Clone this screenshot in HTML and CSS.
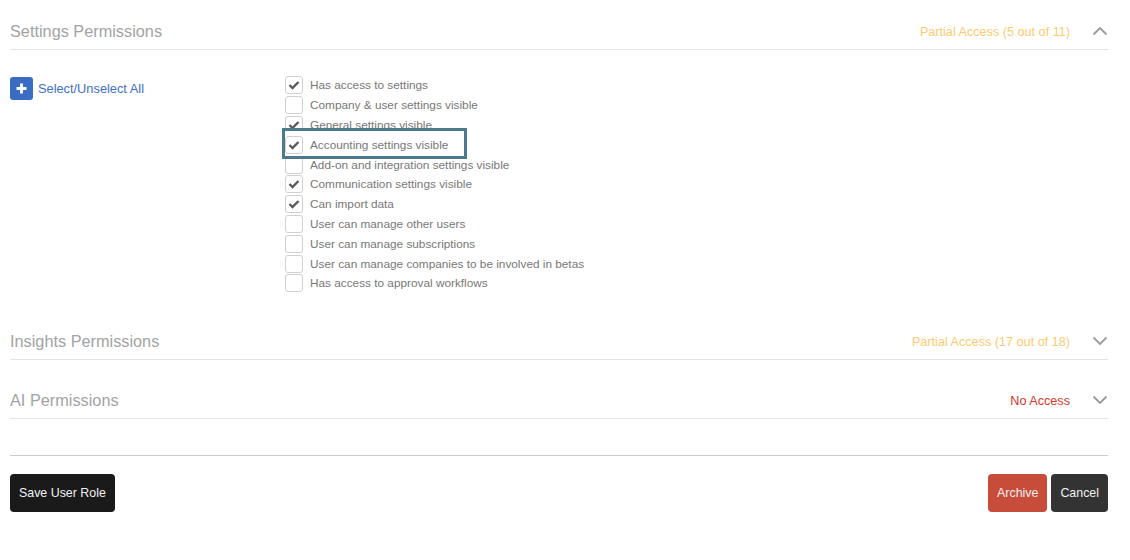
FILE: index.html
```html
<!DOCTYPE html>
<html lang="en">
  <head>
    <meta charset="UTF-8" />
    <title>User Role Permissions</title>
    <link rel="stylesheet" href="styles.css">
  </head>
  <body>
    <section class="section section-open">
      <header class="section-header">
        <h2>Settings Permissions</h2>
        <span class="access access-partial">Partial Access (5 out of 11)</span>
        <svg class="chevron" viewBox="0 0 16 10"><path d="M1.500 8.500 8 2l6.500 6.500"/></svg>
      </header>
      <div class="section-body">
        <a class="select-all">
          <span class="plus-box"><svg viewBox="0 0 10 10"><path d="M5 0.500v9M0.500 5h9"/></svg></span>
          Select/Unselect All
        </a>
        <ul class="options">
          <li class="option"><span class="box checked"><svg viewBox="0 0 12 10"><path d="M1.500 5 4.500 8 10.500 2"/></svg></span>Has access to settings</li>
          <li class="option"><span class="box"></span>Company &amp; user settings visible</li>
          <li class="option"><span class="box checked"><svg viewBox="0 0 12 10"><path d="M1.500 5 4.500 8 10.500 2"/></svg></span>General settings visible</li>
          <li class="option option-highlight"><span class="box checked"><svg viewBox="0 0 12 10"><path d="M1.500 5 4.500 8 10.500 2"/></svg></span>Accounting settings visible</li>
          <li class="option"><span class="box"></span>Add-on and integration settings visible</li>
          <li class="option"><span class="box checked"><svg viewBox="0 0 12 10"><path d="M1.500 5 4.500 8 10.500 2"/></svg></span>Communication settings visible</li>
          <li class="option"><span class="box checked"><svg viewBox="0 0 12 10"><path d="M1.500 5 4.500 8 10.500 2"/></svg></span>Can import data</li>
          <li class="option"><span class="box"></span>User can manage other users</li>
          <li class="option"><span class="box"></span>User can manage subscriptions</li>
          <li class="option"><span class="box"></span>User can manage companies to be involved in betas</li>
          <li class="option"><span class="box"></span>Has access to approval workflows</li>
        </ul>
      </div>
    </section>

    <section class="section">
      <header class="section-header">
        <h2>Insights Permissions</h2>
        <span class="access access-partial">Partial Access (17 out of 18)</span>
        <svg class="chevron" viewBox="0 0 16 10"><path d="M1.500 1.500 8 8l6.500-6.500"/></svg>
      </header>
    </section>

    <section class="section">
      <header class="section-header">
        <h2>AI Permissions</h2>
        <span class="access access-none">No Access</span>
        <svg class="chevron" viewBox="0 0 16 10"><path d="M1.500 1.500 8 8l6.500-6.500"/></svg>
      </header>
    </section>

    <footer class="actions">
      <button class="btn btn-save">Save User Role</button>
      <div class="actions-right">
        <button class="btn btn-archive">Archive</button>
        <button class="btn btn-cancel">Cancel</button>
      </div>
    </footer>
  </body>
</html>
```

FILE: styles.css
```css
html,
body {
  padding: 0;
  margin: 0;
}

body {
  width: 1098px;
  padding-left: 10px;
  font-family: "Liberation Sans", Arial, sans-serif;
  background-color: #fff;
}

.section-header {
  display: flex;
  align-items: center;
  height: 36px;
  padding-top: 13px;
  border-bottom: 1px solid #e4e4e4;
}

.section + .section .section-header {
  padding-top: 22px;
}

.section-header h2 {
  margin: 0;
  margin-right: auto;
  font-size: 16.3px;
  font-weight: 400;
  color: #a3a3a3;
}

.access {
  margin-top: 2px;
  font-size: 12.65px;
}

.access-partial {
  color: #fdcb70;
}

.access-none {
  color: #d0392b;
}

.chevron {
  width: 16px;
  height: 10px;
  margin-left: 22px;
  fill: none;
  stroke: #9a9a9a;
  stroke-width: 1.8;
}

.section-body {
  display: flex;
  height: 225.6px;
  padding-top: 25.5px;
}

.select-all {
  display: flex;
  align-items: center;
  gap: 5px;
  width: 275px;
  height: 23px;
  margin-top: 1.5px;
  font-size: 12.8px;
  color: #3f6fc4;
}

.plus-box {
  display: flex;
  align-items: center;
  justify-content: center;
  width: 23px;
  height: 23px;
  border-radius: 3px;
  background-color: #3b6cc4;
}

.plus-box svg {
  width: 11px;
  height: 11px;
  fill: none;
  stroke: #fff;
  stroke-width: 2.6;
}

.options {
  list-style: none;
  margin: 0;
  padding: 0;
}

.option {
  display: flex;
  align-items: center;
  gap: 7px;
  height: 19.8px;
  font-size: 11.8px;
  color: #777;
}

.box {
  display: flex;
  align-items: center;
  justify-content: center;
  flex: none;
  box-sizing: border-box;
  width: 18px;
  height: 18px;
  border: 1px solid #cfcfcf;
  border-radius: 3px;
  background-color: #fff;
}

.box svg {
  width: 12px;
  height: 10px;
  fill: none;
  stroke: #5a5a5a;
  stroke-width: 2.4;
}

.option-highlight {
  position: relative;
  z-index: 1;
}

.option-highlight::before {
  content: "";
  position: absolute;
  z-index: -1;
  left: -3px;
  top: -7px;
  width: 185px;
  height: 31px;
  box-sizing: border-box;
  border: 3px solid #4a7a8c;
  background-color: #fff;
}

.actions {
  display: flex;
  justify-content: space-between;
  margin-top: 36px;
  padding-top: 18px;
  border-top: 1px solid #ccc;
}

.actions-right {
  display: flex;
  gap: 4px;
}

.btn {
  height: 38px;
  padding: 0 9px;
  border: none;
  border-radius: 4px;
  font-family: inherit;
  font-size: 12.4px;
  color: #f2f2f2;
}

.btn-save {
  background-color: #1a1a1a;
}

.btn-archive {
  background-color: #c84c3a;
}

.btn-cancel {
  background-color: #333;
}
```
